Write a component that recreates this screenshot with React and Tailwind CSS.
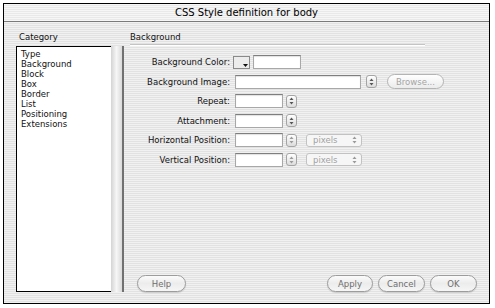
import React from "react";

// aqua pinstripe background
const stripes =
  "bg-[repeating-linear-gradient(180deg,#f1f1f1_0px,#f1f1f1_1px,#e2e2e2_1px,#e2e2e2_2px)]";

function Stepper({ dim = false }) {
  const c = dim ? "#9a9a9a" : "#555";
  return (
    <div className="w-[11px] h-[13px] rounded-[3px] border border-[#a4a4a4] bg-gradient-to-b from-white to-[#dcdcdc] flex items-center justify-center">
      <svg width="5" height="8" viewBox="0 0 5 8">
        <path d="M2.5 0.5 L4.5 3 H0.5 Z" fill={c} />
        <path d="M2.5 7.5 L4.5 5 H0.5 Z" fill={c} />
      </svg>
    </div>
  );
}

function Field({ w }) {
  return (
    <div
      className={`${w} h-[14px] bg-white border border-[#a8a8a8] border-t-[#7e7e7e] shadow-[inset_0_1px_1px_rgba(0,0,0,0.12)]`}
    />
  );
}

function Units() {
  return (
    <div className="ml-[9px] w-[56px] h-[13px] rounded-[3px] border border-[#c2c2c2] bg-[#f6f6f6] flex items-center justify-between pl-[6px] pr-[4px] text-[#a2a2a2]">
      <span>pixels</span>
      <svg width="5" height="8" viewBox="0 0 5 8">
        <path d="M2.5 0.5 L4.5 3 H0.5 Z" fill="#9a9a9a" />
        <path d="M2.5 7.5 L4.5 5 H0.5 Z" fill="#9a9a9a" />
      </svg>
    </div>
  );
}

function Pill({ children, w }) {
  return (
    <div
      className={`${w} h-[17px] rounded-full border border-[#9c9c9c] bg-gradient-to-b from-[#fbfbfb] via-[#ececec] to-[#f6f6f6] shadow-[0_1px_1px_rgba(0,0,0,0.15)] flex items-center justify-center text-[#6e6e6e]`}
    >
      {children}
    </div>
  );
}

function Row({ label, children }) {
  return (
    <div className="flex items-center h-[14px]">
      <div className="w-[107px] text-right pr-[1px]">{label}</div>
      <div className="flex items-center ml-[4px]">{children}</div>
    </div>
  );
}

export default function App() {
  const categories = [
    "Type",
    "Background",
    "Block",
    "Box",
    "Border",
    "List",
    "Positioning",
    "Extensions",
  ];

  return (
    <div className="w-[495px] h-[308px] bg-white pt-[3px] pl-[3px] font-['Lucida_Grande','DejaVu_Sans',sans-serif] text-[8.5px] text-[#111] leading-[10px]">
      <div className={`w-[487px] h-[301px] border border-black flex flex-col ${stripes}`}>
        {/* title bar */}
        <div className="h-[18px] shrink-0 border-b border-[#7a7a7a] bg-[repeating-linear-gradient(180deg,#f6f6f6_0px,#f6f6f6_1px,#e9e9e9_1px,#e9e9e9_2px)] flex items-center justify-center text-[10px] text-black">
          CSS Style definition for body
        </div>

        {/* headings */}
        <div className="h-[24px] shrink-0 flex">
          <div className="w-[118px] pl-[15px] pt-[10px]">Category</div>
          <div className="pl-[8px] pt-[10px]">
            <div>Background</div>
            <div className="mt-[2px] w-[295px] h-[2px] border-t border-[#c4c4c4] border-b border-b-white" />
          </div>
        </div>

        {/* main area */}
        <div className="flex">
          <div className="w-[12px]" />
          <div className="w-[95px] h-[246px] bg-white border-t border-l border-b border-black pl-[4px] pt-[2px]">
            {categories.map((c) => (
              <div key={c} className="h-[10px]">
                {c}
              </div>
            ))}
          </div>
          <div className="w-[11px] h-[246px] bg-gradient-to-r from-[#d4d4d4] via-[#f6f6f6] to-[#dadada]" />

          <div className="flex-1 h-[246px] border-l-2 border-[#717171] flex flex-col">
            <div className="pt-[9px] flex flex-col gap-[5.5px]">
              <Row label="Background Color:">
                <div className="-ml-[2px] w-[17px] h-[13px] border border-[#8a8a8a] bg-[#ececec] relative">
                  <svg className="absolute right-[1px] bottom-[1px]" width="5" height="3" viewBox="0 0 5 3">
                    <path d="M0 0 H5 L2.5 3 Z" fill="#111" />
                  </svg>
                </div>
                <div className="ml-[3px]">
                  <Field w="w-[48px]" />
                </div>
              </Row>
              <Row label="Background Image:">
                <Field w="w-[126px]" />
                <div className="ml-[5px]">
                  <Stepper />
                </div>
                <div className="ml-[10px] w-[57px] h-[15px] rounded-full border border-[#b4b4b4] bg-gradient-to-b from-white to-[#ebebeb] flex items-center justify-center text-[#a4a4a4]">
                  Browse...
                </div>
              </Row>
              <Row label="Repeat:">
                <Field w="w-[48px]" />
                <div className="ml-[3px]">
                  <Stepper />
                </div>
              </Row>
              <Row label="Attachment:">
                <Field w="w-[48px]" />
                <div className="ml-[3px]">
                  <Stepper />
                </div>
              </Row>
              <Row label="Horizontal Position:">
                <Field w="w-[48px]" />
                <div className="ml-[3px]">
                  <Stepper dim />
                </div>
                <Units />
              </Row>
              <Row label="Vertical Position:">
                <Field w="w-[48px]" />
                <div className="ml-[3px]">
                  <Stepper dim />
                </div>
                <Units />
              </Row>
            </div>

            <div className="mt-auto flex justify-between pl-[13px] pr-[12px]">
              <Pill w="w-[49px]">Help</Pill>
              <div className="flex gap-[5px]">
                <Pill w="w-[46px]">Apply</Pill>
                <Pill w="w-[47px]">Cancel</Pill>
                <Pill w="w-[47px]">OK</Pill>
              </div>
            </div>
          </div>
        </div>
      </div>
    </div>
  );
}
